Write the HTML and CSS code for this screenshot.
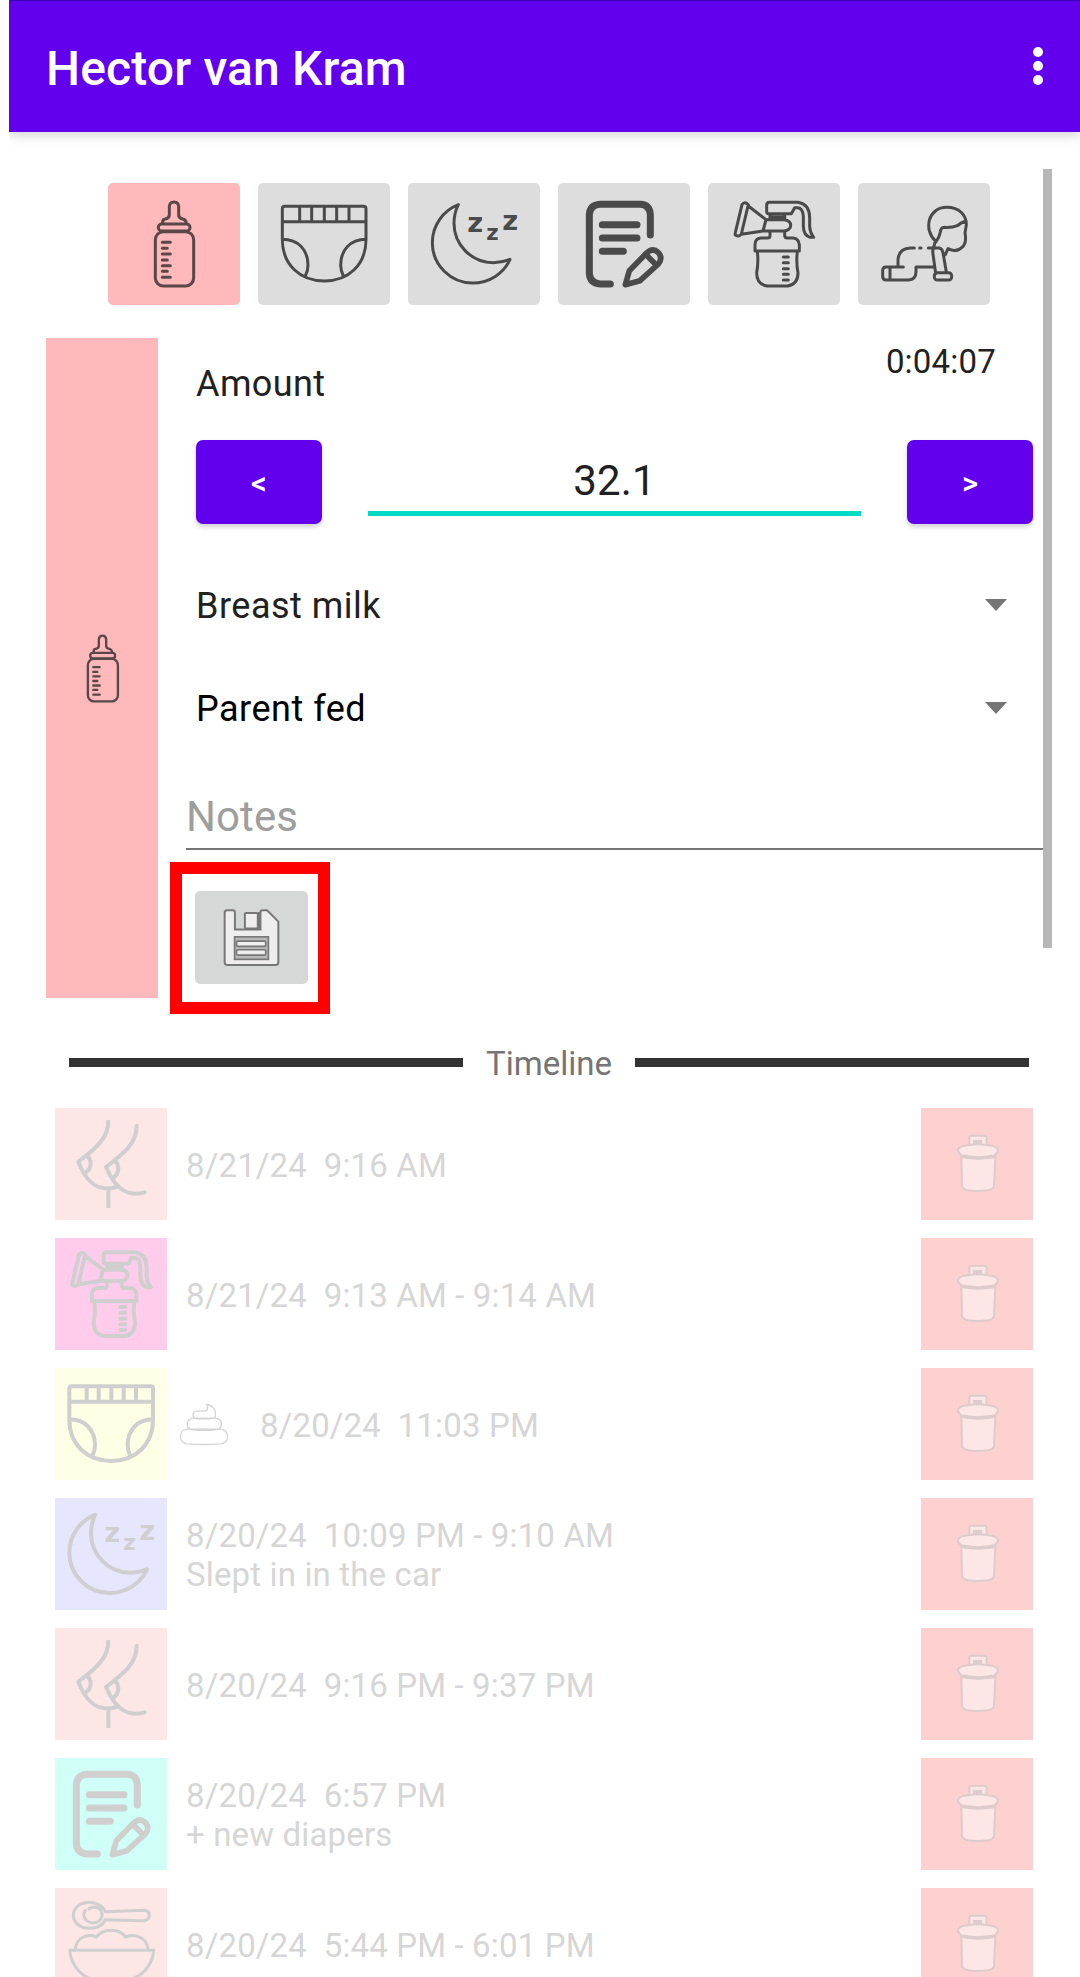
FILE: index.html
```html
<!DOCTYPE html>
<html lang="en">
<head>
<meta charset="utf-8">
<title>Hector van Kram</title>
<link rel="stylesheet" href="styles.css">
</head>
<body>
<svg class="defs" aria-hidden="true">
  <symbol id="bottle" viewBox="0 0 264 264">
    <path d="M98 70V66Q98 58 106 57Q118 54 118 45V20Q119 6 132 6T146 20V45Q146 54 158 57Q167 59 168 66V70"/>
    <rect x="85" y="72" width="95" height="21" rx="10"/>
    <rect x="76" y="95" width="115" height="163" rx="24"/>
    <path d="M97 127h24M97 145h15M97 162h24M97 180h15M97 197h24M97 214h15M97 232h24"/>
  </symbol>
  <symbol id="diaper" viewBox="0 0 264 264">
    <path d="M7 26Q7 19 14 19H251Q258 19 258 26V118C258 195 205 243 133 243S7 195 7 118ZM7 65H258M59 19V65M95 19V65M133 19V65M170 19V65M207 19V65M7 118C55 118 84 150 84 195Q84 212 76 228M258 118C211 118 182 150 182 195Q182 212 190 228"/>
  </symbol>
  <symbol id="moon" viewBox="0 0 264 264">
    <path d="M85 14C40 32 7 75 7 128C7 195 62 249 128 249C178 249 222 220 240 178C220 186 205 188 190 188C125 188 72 135 72 70C72 50 76 32 85 14Z"/>
    <text class="zed" x="112" y="95" font-size="82">z</text>
    <text class="zed" x="169" y="120" font-size="64">z</text>
    <text class="zed" x="217" y="91" font-size="82">z</text>
  </symbol>
  <symbol id="note" viewBox="0 0 264 264">
    <path class="bold" d="M211 105V44Q209 14 181 13H60Q30 15 28 44V220Q30 250 60 252H91M67 74H171M67 114H171M67 154H130"/>
    <path class="pencil" d="M136 254L148 212L199 160Q218 141 234 157T235 192L180 242Z"/>
    <path class="pencil" d="M197 163L223 189"/>
  </symbol>
  <symbol id="pump" viewBox="0 0 264 264">
    <path d="M36 14Q44 2 55 14L34 102Q27 112 16 105Q15 103 16 98ZM55 18L108 59M34 103L99 93M108 59L99 93M108 59H162Q182 61 182 76T162 93H99M120 43V57M164 43V57M120 50H164"/>
    <path d="M118 7H204Q238 12 239 52V80Q240 98 251 112H240Q221 106 220 80V48Q218 22 201 23H194L184 41H114Q110 41 110 34V16Q110 7 118 7ZM120 95V107Q120 114 112 114H92Q75 116 75 134V153H208V134Q206 116 190 114H172Q164 114 164 106V95M82 155Q86 187 80 218Q80 253 112 258H172Q204 253 204 218Q198 187 202 155M160 171h15M160 188h15M160 206h15M160 223h15M160 240h15"/>
  </symbol>
  <symbol id="baby" viewBox="0 0 264 264">
    <path d="M168 125C128 88 145 22 200 22C240 22 260 48 259 75L255 98Q261 130 246 142Q228 159 204 146L196 164M257 64Q247 66 232 77Q218 83 193 82Q182 83 181 95Q179 112 164 130L158 155L167 220M145 144H178Q187 146 189 158L199 216M103 144H92Q56 145 54 180V201M70 201H18Q8 201 8 212V228Q8 240 18 240H85Q108 238 108 215V201H160M30 203V240M119 144h4"/>
    <rect x="163" y="218" width="52" height="22" rx="9"/>
  </symbol>
  <symbol id="breast" viewBox="0 0 264 264">
    <path d="M124 3C124 52 92 82 34 125C52 175 88 223 155 199M59 106C76 120 74 146 57 157M209 17C209 68 175 98 117 141C138 190 170 235 233 217M144 121C158 136 157 160 140 173M124 208V262"/>
  </symbol>
  <symbol id="food" viewBox="0 0 264 264">
    <path d="M115 34C95-5 21-2 19 46C21 93 95 97 115 61M115 35L232 31Q247 33 247 46T232 62L115 59M66 26C88 14 106 28 105 48C100 77 56 75 51 48Q50 39 55 31M25 148C28 112 60 100 88 111C110 84 155 84 176 111C205 100 240 112 243 148M8 151H260C256 200 220 235 180 240H85C50 235 12 200 8 151Z"/>
  </symbol>
  <symbol id="trash" viewBox="159 156 144 192">
    <path class="shape" d="M184 230L186 318Q188 328 204 331Q234 335 264 331Q280 328 282 318L286 230Z"/>
    <path class="shape" d="M208 196V173Q208 167 214 167H253Q260 167 260 173V196"/>
    <path class="slot" d="M219 180H246V195H219Z"/>
    <path class="shape" d="M208 195Q234 190 260 195L282 199Q294 204 294 211Q294 219 284 226Q234 237 184 226Q174 219 174 211Q174 204 186 199Z"/>
    <path class="slot" d="M219 180H246V195H219Z"/>
    <path class="shade" d="M188 232Q234 240 282 232"/>
  </symbol>
  <symbol id="poop" viewBox="417 938 150 128">
    <path d="M444 1016H541C568 1016 571 1056 543 1060Q493 1064 441 1060C413 1056 416 1016 444 1016ZM460 983H526C550 986 551 1015 526 1018Q493 1021 460 1018C435 1015 436 986 460 983ZM500 942C521 945 530 962 525 981Q520 985 510 985H469C455 982 456 964 470 962H493Q508 960 500 942Z"/>
  </symbol>
  <symbol id="floppy" viewBox="576 504 178 178">
    <path class="disk" d="M584 519Q584 511 591 511H608Q615 511 615 518V569H692V518Q692 511 699 511H712L746 545V668Q746 676 738 676H592Q584 676 584 668Z"/>
    <path class="edge" d="M688 516V568"/>
    <rect class="disk" x="645" y="519" width="39" height="47" rx="4"/>
    <rect class="label" x="614" y="591" width="102" height="68"/>
    <rect class="disk thin" x="620" y="604" width="88" height="16" rx="4"/>
    <rect class="disk thin" x="620" y="630" width="88" height="16" rx="4"/>
  </symbol>
</svg>

<header class="appbar">
  <h1>Hector van Kram</h1>
  <div class="menu"><i></i><i></i><i></i></div>
</header>

<main>
  <nav class="types">
    <div class="type active"><svg><use href="#bottle"/></svg></div>
    <div class="type"><svg><use href="#diaper"/></svg></div>
    <div class="type"><svg><use href="#moon"/></svg></div>
    <div class="type"><svg><use href="#note"/></svg></div>
    <div class="type"><svg><use href="#pump"/></svg></div>
    <div class="type"><svg><use href="#baby"/></svg></div>
  </nav>

  <section class="entry">
    <div class="stripe"><svg><use href="#bottle"/></svg></div>
    <div class="form">
      <div class="top"><span class="caption">Amount</span><span class="timer">0:04:07</span></div>
      <div class="stepper">
        <div class="btn">&lt;</div>
        <div class="value">32.1</div>
        <div class="btn">&gt;</div>
      </div>
      <div class="spinner"><span>Breast milk</span><svg viewBox="0 0 22 12"><path d="M0 0H22L11 12Z"/></svg></div>
      <div class="spinner second"><span>Parent fed</span><svg viewBox="0 0 22 12"><path d="M0 0H22L11 12Z"/></svg></div>
      <div class="notes">Notes</div>
      <div class="save"><svg><use href="#floppy"/></svg></div>
    </div>
  </section>

  <div class="divider"><span>Timeline</span></div>

  <ul class="timeline">
    <li><div class="tile feed"><svg><use href="#breast"/></svg></div><p>8/21/24&nbsp; 9:16 AM</p><div class="del"><svg><use href="#trash"/></svg></div></li>
    <li><div class="tile pumping"><svg><use href="#pump"/></svg></div><p>8/21/24&nbsp; 9:13 AM - 9:14 AM</p><div class="del"><svg><use href="#trash"/></svg></div></li>
    <li><div class="tile change"><svg><use href="#diaper"/></svg></div><svg class="poop"><use href="#poop"/></svg><p>8/20/24&nbsp; 11:03 PM</p><div class="del"><svg><use href="#trash"/></svg></div></li>
    <li><div class="tile sleep"><svg><use href="#moon"/></svg></div><p>8/20/24&nbsp; 10:09 PM - 9:10 AM<br>Slept in in the car</p><div class="del"><svg><use href="#trash"/></svg></div></li>
    <li><div class="tile feed"><svg><use href="#breast"/></svg></div><p>8/20/24&nbsp; 9:16 PM - 9:37 PM</p><div class="del"><svg><use href="#trash"/></svg></div></li>
    <li><div class="tile memo"><svg><use href="#note"/></svg></div><p>8/20/24&nbsp; 6:57 PM<br>+ new diapers</p><div class="del"><svg><use href="#trash"/></svg></div></li>
    <li><div class="tile feed"><svg class="fine"><use href="#food"/></svg></div><p>8/20/24&nbsp; 5:44 PM - 6:01 PM</p><div class="del"><svg><use href="#trash"/></svg></div></li>
  </ul>
</main>
<div class="scrollbar"></div>
</body>
</html>
```

FILE: styles.css
```css
*, *::before, *::after { box-sizing: border-box; }
html { overflow: hidden; }
body {
  position: relative;
  width: 1080px;
  height: 1977px;
  margin: 0;
  overflow: hidden;
  background: #fff;
  color: #212121;
  font-family: Roboto, sans-serif;
}
svg { display: block; }
.defs { display: none; }

.appbar {
  display: flex;
  justify-content: space-between;
  height: 132px;
  margin-left: 9px;
  padding: 40px 37px 0 37px;
  border-top: 1px solid #3a00b8;
  background: #6200ee;
  box-shadow: 0 4px 10px rgba(0, 0, 0, .16);
  clip-path: inset(0 0 -20px 0);
}
h1 {
  margin: 0;
  color: #fff;
  font-size: 48px;
  font-weight: 500;
  line-height: 56px;
  letter-spacing: .15px;
}
.menu { display: flex; flex-direction: column; gap: 4px; padding-top: 6px; }
.menu i { width: 10px; height: 10px; border-radius: 50%; background: #fff; }

.types { display: flex; gap: 18px; padding: 51px 0 0 108px; }
.type {
  display: flex;
  align-items: center;
  justify-content: center;
  width: 132px;
  height: 122px;
  border-radius: 5px;
  background: #ddd;
}
.type svg, .tile svg { width: 88px; height: 88px; }
.type svg, .stripe svg {
  fill: none;
  stroke: #4a4a4a;
  stroke-width: 9;
  stroke-linecap: round;
  stroke-linejoin: round;
  color: #4a4a4a;
}
.active, .stripe { background: #ffb9ba; }
.active svg, .stripe svg { stroke: #5a4747; }
.bold { stroke-width: 21; stroke: inherit; }
.type .bold, .type .pencil { stroke: #404040; }
.pencil { stroke-width: 17; }
.zed { fill: currentColor; stroke: none; font-family: "DejaVu Sans", sans-serif; font-weight: 700; }

.entry { display: flex; height: 660px; margin: 33px 0 0 46px; }
.stripe { display: flex; align-items: center; justify-content: center; width: 112px; }
.stripe svg { width: 69px; height: 69px; }
.form { width: 875px; padding-left: 38px; }
.top { display: flex; justify-content: space-between; height: 102px; }
.caption { padding-top: 25px; font-size: 36px; line-height: 43px; letter-spacing: .4px; }
.timer { padding: 4px 37px 0 0; font-size: 33px; line-height: 39px; letter-spacing: .2px; }
.stepper { display: flex; justify-content: space-between; height: 84px; }
.btn {
  width: 126px;
  border-radius: 7px;
  background: #6200ee;
  box-shadow: 0 3px 5px rgba(0, 0, 0, .18);
  color: #fff;
  font-size: 31px;
  font-weight: 500;
  line-height: 88px;
  text-align: center;
}
.value {
  width: 493px;
  height: 76px;
  border-bottom: 5px solid #03dac5;
  font-size: 42px;
  line-height: 82px;
  text-align: center;
  letter-spacing: .2px;
}
.spinner {
  display: flex;
  align-items: center;
  justify-content: space-between;
  height: 60px;
  margin-top: 51px;
  padding-right: 26px;
  font-size: 36px;
  line-height: 42px;
  letter-spacing: .5px;
}
.spinner span { padding-top: 2px; }
.spinner svg { width: 22px; height: 12px; fill: #757575; }
.second { margin-top: 43px; color: #000; }
.notes {
  width: 857px;
  height: 63px;
  margin: 49px 0 0 -10px;
  border-bottom: 2px solid #757575;
  color: #9e9e9e;
  font-size: 42px;
  line-height: 60px;
  letter-spacing: .1px;
}
.save {
  position: relative;
  display: flex;
  align-items: center;
  justify-content: center;
  width: 113px;
  height: 93px;
  margin: 41px 0 0 -1px;
  border-radius: 5px;
  background: #d6d8d7;
}
.save::after {
  content: "";
  position: absolute;
  left: -25px;
  top: -29px;
  width: 160px;
  height: 152px;
  border: 12px solid #f00;
}
.save svg { width: 59px; height: 59px; }
.disk { fill: #eee; stroke: #777; stroke-width: 6; }
.thin { stroke-width: 5; }
.edge { stroke: #777; stroke-width: 8; }
.label { fill: #b8b8b8; stroke: #777; stroke-width: 5; }

.divider {
  display: flex;
  align-items: center;
  gap: 23px;
  height: 39px;
  margin: 45px 51px 0 69px;
  color: #757575;
  font-size: 33px;
  line-height: 39px;
}
.divider span { padding-top: 2px; }
.divider::before, .divider::after { content: ""; flex: 1; height: 9px; background: #333; }

.timeline {
  display: flex;
  flex-direction: column;
  gap: 18px;
  margin: 26px 47px 0 55px;
  padding: 0;
  list-style: none;
}
.timeline li { display: flex; align-items: center; height: 112px; }
.timeline p {
  flex: 1;
  margin: 0 0 0 19px;
  padding-top: 2px;
  color: #d6d6d6;
  font-size: 33px;
  line-height: 39px;
  letter-spacing: .15px;
}
.tile, .del { display: flex; align-items: center; justify-content: center; width: 112px; height: 112px; }
.tile svg {
  fill: none;
  stroke: #cfcfcf;
  stroke-width: 12;
  stroke-linecap: round;
  stroke-linejoin: round;
  color: #cfcfcf;
}
.tile .fine { stroke-width: 9; }
.feed { background: #fde6e6; }
.pumping { background: #ffcceb; }
.change { background: #ffffe6; }
.sleep { background: #e6e6ff; }
.memo { background: #cffff7; }
.poop { width: 50px; height: 43px; margin-left: 12px; fill: none; stroke: #d4d4d4; stroke-width: 4; }
.timeline .poop + p { margin-left: 31px; }
.del { background: #ffd0d0; }
.del svg { width: 48px; height: 64px; }
.shape { fill: #fde6e6; stroke: #dccccc; stroke-width: 6; }
.slot { fill: #dccccc; }
.shade { fill: none; stroke: #dccccc; stroke-width: 6; }

.scrollbar { position: absolute; left: 1043px; top: 169px; width: 9px; height: 779px; background: #b7b7b7; }
```
